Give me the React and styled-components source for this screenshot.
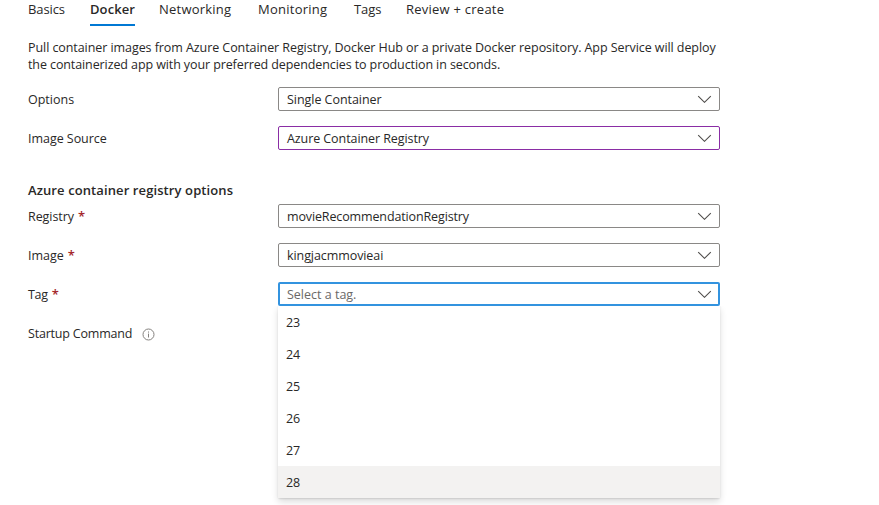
import React from 'react';
import styled, { createGlobalStyle } from 'styled-components';

const GlobalStyle = createGlobalStyle`
  * { box-sizing: border-box; }
  body {
    margin: 0;
    background: #fff;
    color: #292827;
    font-family: 'Open Sans', 'Noto Sans', sans-serif;
    font-size: 12.5px;
    overflow: hidden;
  }
`;

const Page = styled.main`
  width: 879px;
  height: 505px;
  padding-left: 28px;
  overflow: hidden;
`;

const TabBar = styled.nav`
  display: flex;
  height: 26px;
`;

const Tab = styled.a`
  flex: none;
  width: ${(p) => p.$width}px;
  margin-right: ${(p) => p.$gap}px;
  height: 26px;
  line-height: 18px;
  font-size: 13px;
  white-space: nowrap;
  font-weight: ${(p) => (p.$active ? 600 : 400)};
  letter-spacing: ${(p) => p.$spacing}px;
  border-bottom: 2px solid ${(p) => (p.$active ? '#0078d4' : 'transparent')};
`;

const Intro = styled.p`
  margin: 13px 0 14px;
  line-height: 17px;
  white-space: nowrap;
`;

const Line = styled.span`
  display: block;
  letter-spacing: ${(p) => p.$spacing}px;
`;

const Form = styled.div`
  display: flex;
  flex-direction: column;
  gap: 15px;
`;

const Heading = styled.h2`
  margin: 32px 0 5px;
  height: 17px;
  line-height: 17px;
  font-size: 13px;
  font-weight: 600;
  letter-spacing: 0.1px;
`;

const Field = styled.div`
  display: flex;
  width: 692px;
  height: 24px;
`;

const Label = styled.label`
  display: flex;
  align-items: center;
  flex: none;
  width: 250px;
  white-space: nowrap;
`;

const Text = styled.span`
  padding-top: 2px;
  line-height: 24px;
  white-space: nowrap;
  letter-spacing: ${(p) => p.$spacing || 0}px;
`;

const Required = styled.span`
  margin-left: 4px;
  line-height: 24px;
  font-size: 13px;
  font-weight: 600;
  color: #a4262c;
`;

const SelectWrap = styled.div`
  position: relative;
  flex: 1;
`;

const tones = { normal: '#8a8886', changed: '#8a2da5', focused: '#3393df' };

const SelectBox = styled.div`
  display: flex;
  align-items: center;
  justify-content: space-between;
  height: 24px;
  border: ${(p) => (p.$tone === 'focused' ? 2 : 1)}px solid ${(p) => tones[p.$tone]};
  border-radius: 2px;
  padding: 0 ${(p) => (p.$tone === 'focused' ? '6px 0 7px' : '7px 0 8px')};
  color: ${(p) => (p.$tone === 'focused' ? '#6b6967' : '#292827')};
`;

const Chevron = styled.svg`
  width: 15px;
  height: 8px;
  fill: none;
  stroke: #4f4d4b;
  stroke-width: 1.1;
`;

const Info = styled.svg`
  width: 13px;
  height: 13px;
  margin: 2px 0 0 9.5px;
  fill: none;
  stroke: #84817e;
`;

const Menu = styled.ul`
  position: absolute;
  top: 24px;
  left: 0;
  width: 442px;
  margin: 0;
  padding: 0;
  list-style: none;
  background: #fff;
  border-radius: 0 0 2px 2px;
  box-shadow: 0 3.2px 7.2px rgba(0, 0, 0, 0.132), 0 0.6px 1.8px rgba(0, 0, 0, 0.108);
  clip-path: inset(0 -12px -14px -12px);
`;

const MenuItem = styled.li`
  height: 32px;
  padding-left: 8px;
  line-height: 34px;
  letter-spacing: -0.1px;
  background: ${(p) => (p.$hovered ? '#f3f2f1' : 'transparent')};
`;

const tabs = [
  { name: 'Basics', width: 37, gap: 25, spacing: -0.1 },
  { name: 'Docker', width: 45, gap: 24, spacing: 0.09, active: true },
  { name: 'Networking', width: 72, gap: 27, spacing: 0.22 },
  { name: 'Monitoring', width: 69, gap: 27, spacing: 0.25 },
  { name: 'Tags', width: 27, gap: 25, spacing: -0.1 },
  { name: 'Review + create', width: 98, gap: 0, spacing: 0.24 },
];

const tags = ['23', '24', '25', '26', '27', '28'];

function Select({ value, tone = 'normal', spacing, children }) {
  return (
    <SelectWrap>
      <SelectBox $tone={tone}>
        <Text $spacing={spacing}>{value}</Text>
        <Chevron viewBox="0 0 15 8">
          <path d="M1.2 1.1 L7.5 7.3 L13.8 1.1" />
        </Chevron>
      </SelectBox>
      {children}
    </SelectWrap>
  );
}

function FieldLabel({ text, spacing, required, children }) {
  return (
    <Label>
      <Text $spacing={spacing}>{text}</Text>
      {required && <Required>*</Required>}
      {children}
    </Label>
  );
}

export default function App() {
  return (
    <Page>
      <GlobalStyle />
      <TabBar>
        {tabs.map((t) => (
          <Tab key={t.name} $width={t.width} $gap={t.gap} $spacing={t.spacing} $active={t.active}>
            {t.name}
          </Tab>
        ))}
      </TabBar>
      <Intro>
        <Line $spacing={-0.07}>
          Pull container images from Azure Container Registry, Docker Hub or a private Docker repository. App Service will deploy
        </Line>
        <Line $spacing={-0.1}>
          the containerized app with your preferred dependencies to production in seconds.
        </Line>
      </Intro>
      <Form>
        <Field>
          <FieldLabel text="Options" />
          <Select value="Single Container" spacing={-0.04} />
        </Field>
        <Field>
          <FieldLabel text="Image Source" spacing={-0.04} />
          <Select value="Azure Container Registry" tone="changed" spacing={-0.08} />
        </Field>
      </Form>
      <Heading>Azure container registry options</Heading>
      <Form>
        <Field>
          <FieldLabel text="Registry" required spacing={-0.06} />
          <Select value="movieRecommendationRegistry" spacing={-0.13} />
        </Field>
        <Field>
          <FieldLabel text="Image" required />
          <Select value="kingjacmmovieai" spacing={-0.08} />
        </Field>
        <Field>
          <FieldLabel text="Tag" required spacing={-0.3} />
          <Select value="Select a tag." tone="focused">
            <Menu>
              {tags.map((tag) => (
                <MenuItem key={tag} $hovered={tag === '28'}>
                  {tag}
                </MenuItem>
              ))}
            </Menu>
          </Select>
        </Field>
        <Field>
          <FieldLabel text="Startup Command" spacing={-0.2}>
            <Info viewBox="0 0 13 13">
              <circle cx="6.5" cy="6.5" r="5.5" />
              <path d="M6.5 5.6 V9.5 M6.5 3.5 V4.6" />
            </Info>
          </FieldLabel>
        </Field>
      </Form>
    </Page>
  );
}
